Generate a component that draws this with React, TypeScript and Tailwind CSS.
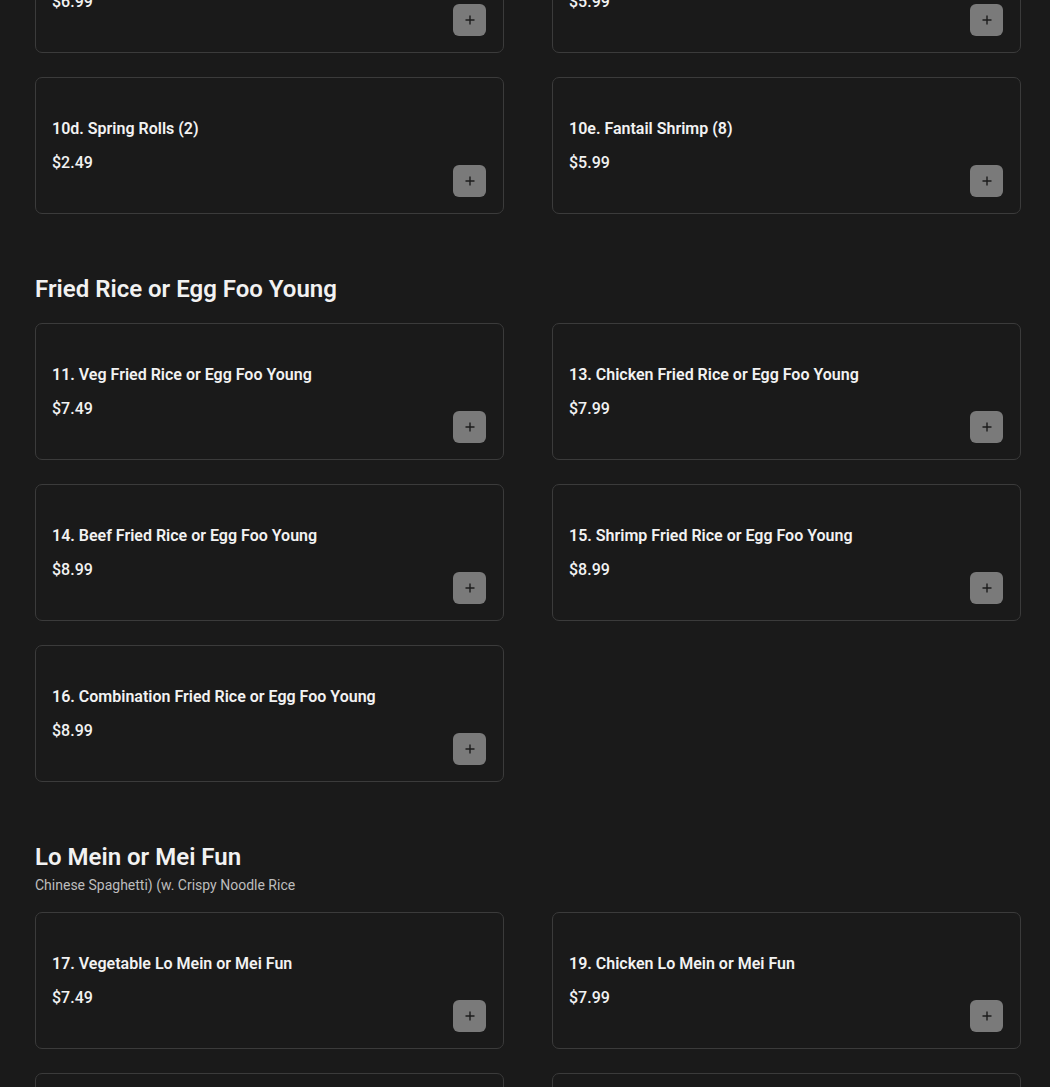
import React from "react";

type Item = { name: string; price: string };

const sections: { title?: string; subtitle?: string; items: Item[] }[] = [
  {
    items: [
      { name: "10b. Egg Rolls (2)", price: "$6.99" },
      { name: "10c. Crab Rangoon (8)", price: "$5.99" },
      { name: "10d. Spring Rolls (2)", price: "$2.49" },
      { name: "10e. Fantail Shrimp (8)", price: "$5.99" },
    ],
  },
  {
    title: "Fried Rice or Egg Foo Young",
    items: [
      { name: "11. Veg Fried Rice or Egg Foo Young", price: "$7.49" },
      { name: "13. Chicken Fried Rice or Egg Foo Young", price: "$7.99" },
      { name: "14. Beef Fried Rice or Egg Foo Young", price: "$8.99" },
      { name: "15. Shrimp Fried Rice or Egg Foo Young", price: "$8.99" },
      { name: "16. Combination Fried Rice or Egg Foo Young", price: "$8.99" },
    ],
  },
  {
    title: "Lo Mein or Mei Fun",
    subtitle: "Chinese Spaghetti) (w. Crispy Noodle Rice",
    items: [
      { name: "17. Vegetable Lo Mein or Mei Fun", price: "$7.49" },
      { name: "19. Chicken Lo Mein or Mei Fun", price: "$7.99" },
      { name: "20. Beef Lo Mein or Mei Fun", price: "$8.99" },
      { name: "21. Shrimp Lo Mein or Mei Fun", price: "$8.99" },
    ],
  },
];

function Card({ item }: { item: Item }) {
  return (
    <div className="h-[137px] rounded-[7px] border border-[#3b3b3b] bg-[#1a1a1a] px-4 pt-4">
      <div className="mt-[23px] text-[16px] font-semibold leading-6 text-[#f2f2f2]">{item.name}</div>
      <div className="mt-[10px] flex items-start justify-between">
        <div className="text-[16px] font-medium leading-6 text-[#f2f2f2]">{item.price}</div>
        <button className="mt-[14px] mr-[1px] flex h-[32px] w-[33px] items-center justify-center rounded-[6px] bg-[#7a7a7a]">
          <svg width="12" height="12" viewBox="0 0 12 12" fill="none">
            <path d="M6 1.5v9M1.5 6h9" stroke="#1c1c1c" strokeWidth="1.4" />
          </svg>
        </button>
      </div>
    </div>
  );
}

export default function App() {
  return (
    <div
      className="min-h-[1087px] overflow-hidden bg-[#1a1a1a] pl-[35px]"
      style={{ fontFamily: "Roboto, 'Liberation Sans', sans-serif" }}
    >
      <div className="mt-[-84px]">
        {sections.map((s, i) => (
          <div key={i} className={i > 0 ? "mt-[59px]" : ""}>
            {s.title && (
              <div className={s.subtitle ? "mb-[17px]" : "mb-[18px]"}>
                <h2 className="text-[24px] font-semibold leading-8 text-[#f2f2f2]">{s.title}</h2>
                {s.subtitle && (
                  <p className="mt-[2px] text-[14px] leading-5 text-[#bdbdbd]">{s.subtitle}</p>
                )}
              </div>
            )}
            <div className="grid grid-cols-[469px_469px] gap-x-[48px] gap-y-[24px]">
              {s.items.map((it) => (
                <Card key={it.name} item={it} />
              ))}
            </div>
          </div>
        ))}
      </div>
    </div>
  );
}
